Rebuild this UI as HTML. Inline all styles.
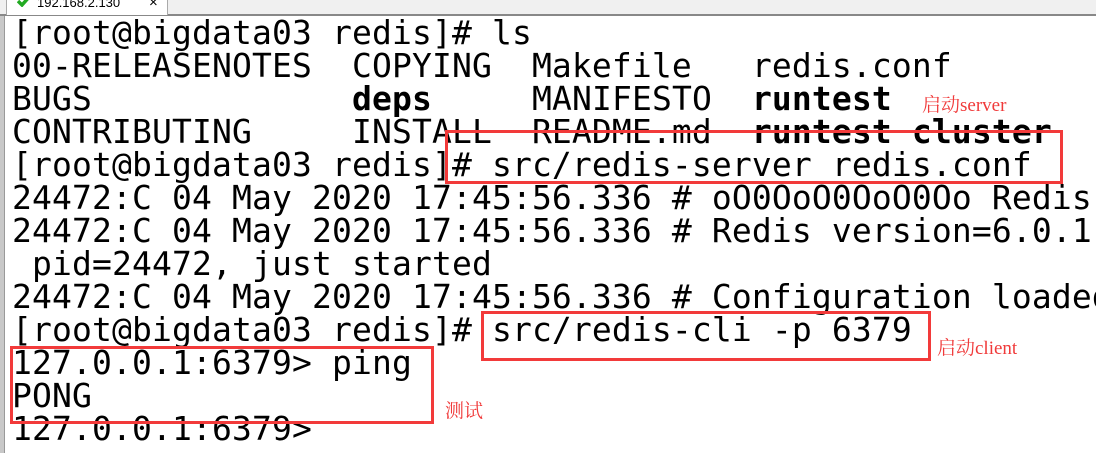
<!DOCTYPE html>
<html><head><meta charset="utf-8"><style>
html,body{margin:0;padding:0;width:1096px;height:453px;overflow:hidden;background:#fff;position:relative}
.hdr{position:absolute;left:0;top:0;width:1096px;height:14px;background:#f0f0f0;border-bottom:2px solid #888}
.tab{position:absolute;left:6px;top:-4px;width:160px;height:18px;background:#fff;border:1px solid #aaa;border-bottom:none;font:13px "Liberation Sans",sans-serif;color:#000}
.tab span{position:absolute;left:30px;top:-2px}
.tab b{position:absolute;left:142px;top:-3px;font-weight:normal;font-size:15px}
.lb{position:absolute;left:0;top:16px;width:4px;height:437px;background:#c8c8c8;border-right:1px solid #999}
pre{position:absolute;left:12px;top:16px;margin:0;font:33px/33px "DejaVu Sans Mono","Liberation Mono",monospace;letter-spacing:0.13px;color:#000;white-space:pre}
pre b{font-weight:bold}
.box{position:absolute;border:3px solid #f23a3a;box-sizing:border-box}
.lab{position:absolute;color:#f03a3a;font:19px "Liberation Serif","Noto Serif CJK SC",serif;white-space:nowrap}
</style></head><body>
<div class="hdr"><div class="tab"><svg style="position:absolute;left:10px;top:-2px" width="14" height="12"><path d="M1 6 L5 10 L13 1" stroke="#2a2" stroke-width="3.5" fill="none"/></svg><span>192.168.2.130</span><b>×</b></div></div>
<div class="lb"></div>
<pre>[root@bigdata03 redis]# ls
00-RELEASENOTES  COPYING  Makefile   redis.conf
BUGS             <b>deps</b>     MANIFESTO  <b>runtest</b>
CONTRIBUTING     INSTALL  README.md  <b>runtest cluster</b>
[root@bigdata03 redis]# src/redis-server redis.conf
24472:C 04 May 2020 17:45:56.336 # oO0OoO0OoO0Oo Redis
24472:C 04 May 2020 17:45:56.336 # Redis version=6.0.1
 pid=24472, just started
24472:C 04 May 2020 17:45:56.336 # Configuration loaded
[root@bigdata03 redis]# src/redis-cli -p 6379
127.0.0.1:6379> ping
PONG
127.0.0.1:6379></pre>
<div class="box" style="left:445px;top:130px;width:618px;height:54px"></div>
<div class="box" style="left:481px;top:311px;width:450px;height:50px"></div>
<div class="box" style="left:10px;top:346px;width:424px;height:78px"></div>
<div class="lab" style="left:922px;top:90px">启动server</div>
<div class="lab" style="left:937px;top:333px">启动client</div>
<div class="lab" style="left:445px;top:396px">测试</div>
</body></html>
